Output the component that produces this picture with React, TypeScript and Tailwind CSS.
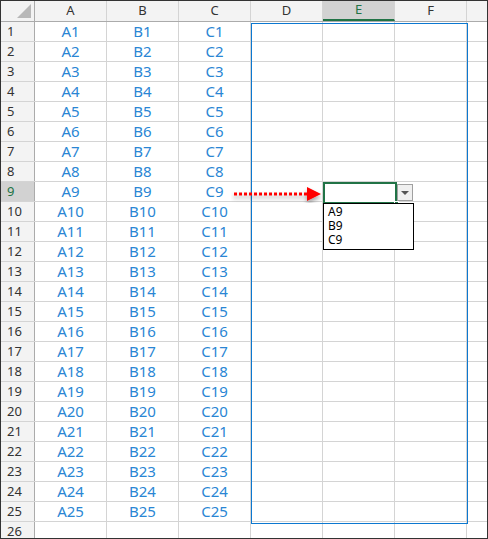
import React from 'react';

const cols = ['A', 'B', 'C', 'D', 'E', 'F', ''];
const rows = Array.from({ length: 26 }, (_, i) => i + 1);

const App: React.FC = () => {
  return (
    <div className="relative w-[488px] h-[539px] overflow-hidden bg-white border border-[#333] font-['Liberation_Sans',Arial,sans-serif]">
      {/* header row */}
      <div className="flex h-[21px] bg-[#f3f3f3] border-b border-[#ababab]">
        <div className="relative w-[34px] shrink-0 border-r border-[#ababab]">
          <div className="absolute right-[3px] bottom-[3px] w-0 h-0 border-l-[14px] border-l-transparent border-b-[14px] border-b-[#b8b8b8]" />
        </div>
        {cols.map((c, i) => (
          <div
            key={i}
            className={`w-[72px] shrink-0 flex items-center justify-center text-[13px] text-[#333] border-r border-[#d4d4d4] ${
              c === 'E' ? 'bg-[#d2d2d2] text-[#217346] border-b-2 border-b-[#217346]' : ''
            }`}
          >
            {c}
          </div>
        ))}
      </div>
      {rows.map((r) => (
        <div key={r} className="flex h-[20px] border-b border-[#d4d4d4]">
          <div
            className={`w-[34px] shrink-0 flex items-center pl-[6px] text-[13px] border-r border-[#ababab] ${
              r === 9 ? 'bg-[#d2d2d2] text-[#217346]' : 'bg-[#f3f3f3] text-[#333]'
            }`}
          >
            {r}
          </div>
          {cols.map((c, i) => (
            <div
              key={i}
              className="w-[72px] shrink-0 flex items-center justify-center text-[15px] text-[#2a86d4] border-r border-[#d4d4d4]"
            >
              {i < 3 && r <= 25 ? `${c}${r}` : ''}
            </div>
          ))}
        </div>
      ))}

      {/* blue range border */}
      <div className="absolute left-[250px] top-[22px] w-[217px] h-[501px] border-[1.5px] border-solid border-[#0c78d0]" />

      {/* selected cell E9 */}
      <div className="absolute left-[322px] top-[181px] w-[74px] h-[22px] border-2 border-[#217346] bg-white" />
      <div className="absolute left-[393px] top-[200px] w-[5px] h-[5px] bg-[#217346] border border-white" />

      {/* dropdown button */}
      <div className="absolute left-[396px] top-[183px] w-[16px] h-[17px] bg-[#f0f0f0] border border-[#a0a0a0] flex items-center justify-center">
        <div className="w-0 h-0 border-l-[4px] border-r-[4px] border-t-[4px] border-l-transparent border-r-transparent border-t-[#555]" />
      </div>

      {/* dropdown list */}
      <div className="absolute left-[322px] top-[202px] w-[91px] h-[47px] bg-white border border-black pl-[4px] pt-[1px] text-[12px] leading-[14px] text-black flex flex-col">
        <span>A9</span>
        <span>B9</span>
        <span>C9</span>
      </div>

      {/* red dotted arrow */}
      <svg className="absolute left-[230px] top-[184px]" width="92" height="18" viewBox="0 0 92 18">
        <defs>
          <filter id="sh" x="-10%" y="-50%" width="120%" height="200%">
            <feDropShadow dx="0" dy="3" stdDeviation="2" floodColor="#000" floodOpacity="0.35" />
          </filter>
        </defs>
        <g filter="url(#sh)">
          <line x1="3" y1="9" x2="78" y2="9" stroke="#ff0000" strokeWidth="3" strokeDasharray="3 2" />
          <polygon points="76,2 90,9 76,16" fill="#ff0000" />
        </g>
      </svg>
    </div>
  );
};

export default App;
